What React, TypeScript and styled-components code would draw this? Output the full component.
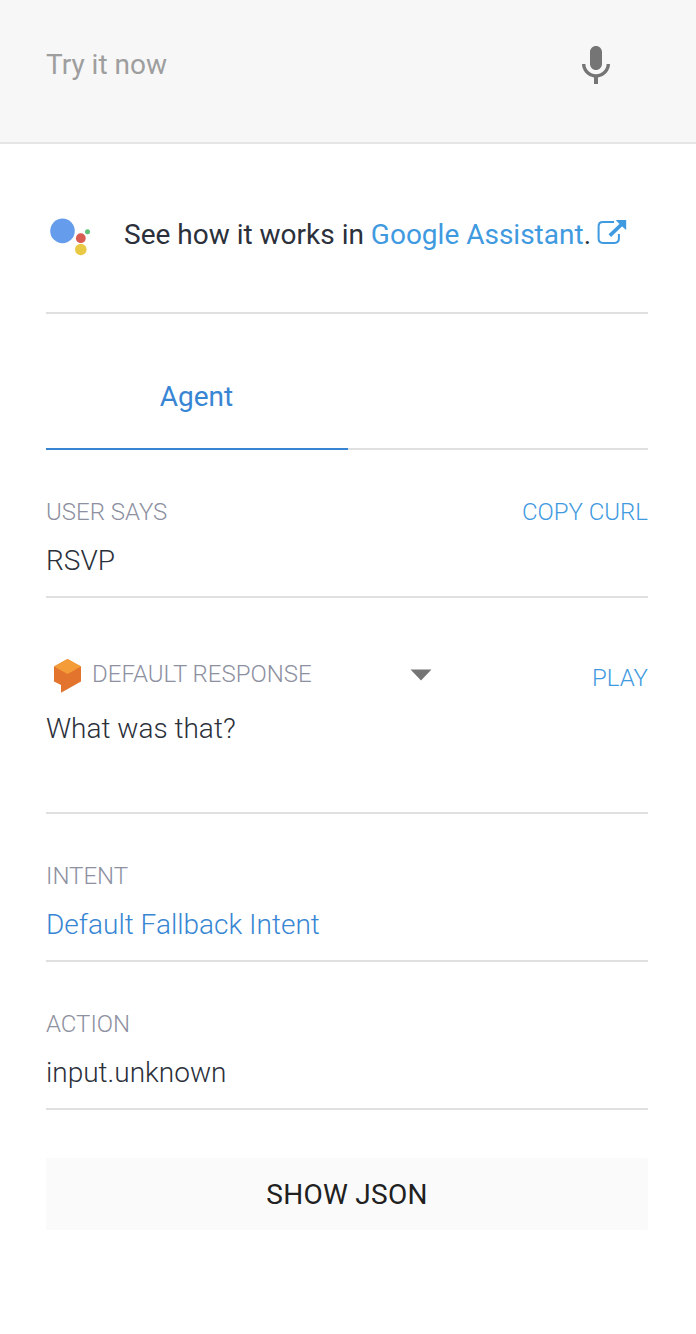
import React from "react";
import styled, { createGlobalStyle } from "styled-components";

const GlobalStyle = createGlobalStyle`
  * { box-sizing: border-box; }
  body {
    margin: 0;
    background: #fff;
    font-family: Roboto, "Liberation Sans", sans-serif;
    color: #2b303b;
    -webkit-font-smoothing: antialiased;
  }
`;

const Page = styled.div`
  min-height: 1334px;
`;

const Header = styled.header`
  display: flex;
  align-items: flex-start;
  justify-content: space-between;
  height: 144px;
  padding: 42px 76px 0 46px;
  background: #f7f7f7;
  border-bottom: 2px solid #e5e5e5;
`;

const QueryInput = styled.input`
  flex: 1;
  min-width: 0;
  height: 45px;
  padding: 0;
  border: 0;
  outline: 0;
  background: transparent;
  font: 400 28px/36px Roboto, sans-serif;
  color: #9e9e9e;
  &::placeholder { color: #9e9e9e; opacity: 1; }
`;

const Content = styled.main`
  padding: 0 48px 0 46px;
`;

const AssistantRow = styled.div`
  display: flex;
  align-items: flex-start;
  height: 170px;
  padding-top: 73px;
  border-bottom: 2px solid #e0e0e0;
  font-size: 28px;
  line-height: 36px;
  white-space: pre;
`;

const AssistantLogo = styled.svg`
  width: 78px;
  height: 44px;
  margin-top: -1px;
  flex: none;
`;

const AssistantLink = styled.a`
  color: #3f9ae0;
  text-decoration: none;
`;

const LinkIcon = styled.svg`
  width: 30px;
  height: 26px;
  margin: 2px 0 0 6px;
  flex: none;
`;

const Tabs = styled.div`
  display: flex;
  height: 136px;
  border-bottom: 2px solid #e0e0e0;
`;

const Tab = styled.div`
  width: 302px;
  height: 136px;
  padding: 65px 1px 0 0;
  border-bottom: 2px solid #3886d3;
  color: #3886d3;
  font-size: 28px;
  line-height: 36px;
  text-align: center;
`;

const Section = styled.section<{ $top?: number; $bottom?: number }>`
  padding: ${(p) => p.$top ?? 48}px 0 ${(p) => p.$bottom ?? 17}px;
  border-bottom: 2px solid #e0e0e0;
`;

const LabelRow = styled.div<{ $gap?: number }>`
  display: flex;
  justify-content: space-between;
  height: 28px;
  margin-bottom: ${(p) => p.$gap ?? 17}px;
`;

const Label = styled.span`
  font-size: 24px;
  line-height: 28px;
  font-weight: 300;
  color: #8d90a0;
`;

const Action = styled.a<{ $drop?: number }>`
  margin-top: ${(p) => p.$drop ?? 0}px;
  font-size: 24px;
  line-height: 28px;
  font-weight: 300;
  color: #3f9ae0;
`;

const Picker = styled.div`
  display: flex;
  width: 386px;
  padding-left: 7px;
`;

const PlatformIcon = styled.svg`
  width: 29px;
  height: 35px;
  margin: -2px 10px 0 0;
  flex: none;
`;

const Caret = styled.svg`
  width: 22px;
  height: 12px;
  margin: 9px 0 0 auto;
`;

const Value = styled.div<{ $link?: boolean }>`
  font-size: 28px;
  line-height: 36px;
  font-weight: 300;
  color: ${(p) => (p.$link ? "#3886d3" : "#2b303b")};
`;

const JsonButton = styled.button`
  display: block;
  width: 100%;
  height: 72px;
  margin-top: 48px;
  padding: 1px 0 0;
  border: 0;
  border-radius: 2px;
  background: #fafafa;
  color: #212121;
  font: 400 28px/71px Roboto, sans-serif;
  letter-spacing: 0.28px;
`;

export default function App() {
  return (
    <Page>
      <GlobalStyle />
      <Header>
        <QueryInput placeholder="Try it now" />
        <svg width="48" height="48" viewBox="0 0 24 24" fill="#757575">
          <path d="M12 14c1.66 0 3-1.34 3-3V5c0-1.66-1.34-3-3-3S9 3.34 9 5v6c0 1.66 1.34 3 3 3zm5.3-3c0 3-2.54 5.1-5.3 5.1S6.7 14 6.7 11H5c0 3.41 2.72 6.23 6 6.72V21h2v-3.28c3.28-.48 6-3.3 6-6.72h-1.7z" />
        </svg>
      </Header>
      <Content>
        <AssistantRow>
          <AssistantLogo viewBox="0 0 78 44">
            <circle cx="16.5" cy="14.9" r="12.3" fill="#659dec" />
            <circle cx="34.8" cy="22.2" r="4.9" fill="#d95c52" />
            <circle cx="34.8" cy="33.5" r="5.8" fill="#e9c943" />
            <circle cx="41.5" cy="15.7" r="2.5" fill="#5fc079" />
          </AssistantLogo>
          <span>See how it works in <AssistantLink>Google Assistant</AssistantLink>.</span>
          <LinkIcon viewBox="0 0 30 26">
            <path d="M17 3H6Q1.600 3 1.600 7.400V19.600Q1.600 24 6 24H17.500Q21.900 24 21.900 19.600V15" fill="none" stroke="#3f9ae0" strokeWidth="2" />
            <path d="M12.800 16.600L25 5" fill="none" stroke="#3f9ae0" strokeWidth="3.600" />
            <path d="M18.700 1H29.200V11L26 8.300 21.500 4Z" fill="#3f9ae0" />
          </LinkIcon>
        </AssistantRow>
        <Tabs>
          <Tab>Agent</Tab>
        </Tabs>
        <Section>
          <LabelRow>
            <Label>USER SAYS</Label>
            <Action>COPY CURL</Action>
          </LabelRow>
          <Value>RSVP</Value>
        </Section>
        <Section $top={62} $bottom={65}>
          <LabelRow $gap={23}>
            <Picker>
              <PlatformIcon viewBox="0 0 29 35">
                <path d="M1 8.500L14.500 1 28 8.500V23.500L8 34.800V27L1 23.500Z" fill="#e3742d" />
                <path d="M1 8.500L14.500 1 28 8.500 14.500 16Z" fill="#f49c38" />
              </PlatformIcon>
              <Label>DEFAULT RESPONSE</Label>
              <Caret viewBox="0 0 22 12">
                <path d="M0.500 0.500H21.500L11 11.500Z" fill="#757575" />
              </Caret>
            </Picker>
            <Action $drop={4}>PLAY</Action>
          </LabelRow>
          <Value>What was that?</Value>
        </Section>
        <Section>
          <LabelRow>
            <Label>INTENT</Label>
          </LabelRow>
          <Value $link>Default Fallback Intent</Value>
        </Section>
        <Section>
          <LabelRow>
            <Label>ACTION</Label>
          </LabelRow>
          <Value>input.unknown</Value>
        </Section>
        <JsonButton>SHOW JSON</JsonButton>
      </Content>
    </Page>
  );
}
